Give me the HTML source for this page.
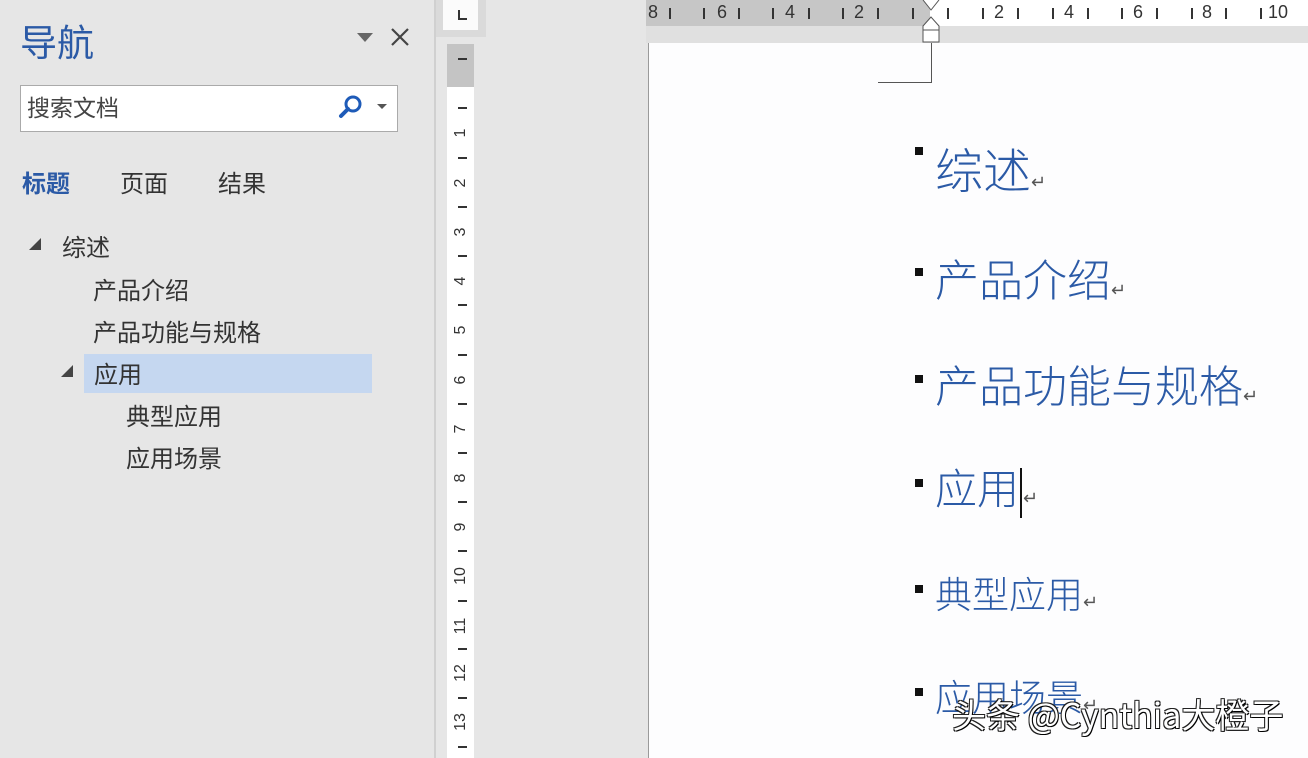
<!DOCTYPE html>
<html><head><meta charset="utf-8"><style>
*{margin:0;padding:0;box-sizing:border-box}
body{width:1308px;height:758px;overflow:hidden;background:#e6e6e6;position:relative;font-family:"Liberation Sans","Noto Sans CJK SC",sans-serif}
.a{position:absolute;white-space:nowrap}
.cj{font-family:"Noto Sans CJK SC","WenQuanYi Zen Hei",sans-serif}
.nav{font-size:24px;color:#333;line-height:1}
.doc{color:#2b5aa6;line-height:1;font-family:"Noto Sans CJK SC",sans-serif;font-weight:300}
.bul{position:absolute;width:8px;height:8px;background:#111}
.ret{font-size:18px;color:#555}
.vt{position:absolute;left:458px;width:9px;height:2px;background:#333}
.vn{position:absolute;left:450px;width:22px;text-align:center;font-size:16px;color:#333;transform:rotate(-90deg);line-height:16px}
.ht{position:absolute;top:8px;width:2px;height:11px;background:#333}
.hn{position:absolute;top:3px;font-size:18px;color:#333;line-height:18px}
</style></head><body>
<div class="a cj" style="left:20px;top:22px;font-size:37px;color:#2b5aa6;line-height:1">导航</div>
<div class="a" style="left:357px;top:33px;width:0;height:0;border-left:8px solid transparent;border-right:8px solid transparent;border-top:9px solid #666"></div>
<svg class="a" style="left:390px;top:27px" width="20" height="20"><path d="M2 2L18 18M18 2L2 18" stroke="#444" stroke-width="2.2"/></svg>
<div class="a" style="left:20px;top:85px;width:378px;height:47px;background:#fff;border:1px solid #aaa"></div>
<div class="a cj" style="left:27px;top:95px;font-size:23px;color:#444;line-height:1">搜索文档</div>
<svg class="a" style="left:335px;top:92px" width="32" height="30"><circle cx="18" cy="12" r="7" fill="none" stroke="#1e5bb8" stroke-width="3"/><path d="M13 17L6 24" stroke="#1e5bb8" stroke-width="4" stroke-linecap="round"/></svg>
<div class="a" style="left:377px;top:104px;width:0;height:0;border-left:5px solid transparent;border-right:5px solid transparent;border-top:5px solid #555"></div>
<div class="a cj" style="left:22px;top:170px;font-size:24px;color:#2b5aa6;font-weight:bold;line-height:1">标题</div>
<div class="a cj nav" style="left:120px;top:170px">页面</div>
<div class="a cj nav" style="left:218px;top:170px">结果</div>
<div class="a" style="left:29px;top:238px;width:0;height:0;border-left:12px solid transparent;border-bottom:12px solid #444"></div>
<div class="a cj nav" style="left:62px;top:234px">综述</div>
<div class="a cj nav" style="left:93px;top:277px">产品介绍</div>
<div class="a cj nav" style="left:93px;top:319px">产品功能与规格</div>
<div class="a" style="left:84px;top:354px;width:288px;height:39px;background:#c5d7f0"></div>
<div class="a" style="left:61px;top:365px;width:0;height:0;border-left:12px solid transparent;border-bottom:12px solid #444"></div>
<div class="a cj nav" style="left:94px;top:361px">应用</div>
<div class="a cj nav" style="left:126px;top:403px">典型应用</div>
<div class="a cj nav" style="left:126px;top:445px">应用场景</div>
<div class="a" style="left:434px;top:0;width:2px;height:758px;background:#d0d0d0"></div>
<div class="a" style="left:436px;top:0;width:50px;height:37px;background:#dadada"></div>
<div class="a" style="left:443px;top:0;width:35px;height:30px;background:#fbfbfb"></div>
<div class="a" style="left:458px;top:10px;width:2px;height:10px;background:#333"></div>
<div class="a" style="left:458px;top:18px;width:9px;height:2px;background:#333"></div>
<div class="a" style="left:447px;top:44px;width:27px;height:714px;background:#fff"></div>
<div class="a" style="left:447px;top:44px;width:27px;height:43px;background:#c4c4c4"></div>
<div class="vt" style="top:58px"></div>
<div class="vt" style="top:107px"></div>
<div class="vn" style="top:125px">1</div><div class="vt" style="top:157px"></div>
<div class="vn" style="top:175px">2</div><div class="vt" style="top:206px"></div>
<div class="vn" style="top:224px">3</div><div class="vt" style="top:255px"></div>
<div class="vn" style="top:273px">4</div><div class="vt" style="top:304px"></div>
<div class="vn" style="top:322px">5</div><div class="vt" style="top:354px"></div>
<div class="vn" style="top:372px">6</div><div class="vt" style="top:403px"></div>
<div class="vn" style="top:421px">7</div><div class="vt" style="top:452px"></div>
<div class="vn" style="top:470px">8</div><div class="vt" style="top:501px"></div>
<div class="vn" style="top:519px">9</div><div class="vt" style="top:550px"></div>
<div class="vn" style="top:568px">10</div><div class="vt" style="top:600px"></div>
<div class="vn" style="top:618px">11</div><div class="vt" style="top:648px"></div>
<div class="vn" style="top:665px">12</div><div class="vt" style="top:697px"></div>
<div class="vn" style="top:714px">13</div><div class="vt" style="top:746px"></div>
<div class="a" style="left:646px;top:0;width:662px;height:26px;background:#fff"></div>
<div class="a" style="left:646px;top:0;width:284px;height:26px;background:#c6c6c6"></div>
<div class="a" style="left:646px;top:26px;width:662px;height:17px;background:#e0e0e0"></div>
<div class="hn" style="left:648px">8</div><div class="ht" style="left:669px"></div><div class="ht" style="left:703px"></div>
<div class="hn" style="left:717px">6</div><div class="ht" style="left:738px"></div><div class="ht" style="left:772px"></div>
<div class="hn" style="left:785px">4</div><div class="ht" style="left:808px"></div><div class="ht" style="left:842px"></div>
<div class="hn" style="left:854px">2</div><div class="ht" style="left:877px"></div><div class="ht" style="left:912px"></div>
<div class="ht" style="left:947px"></div>
<div class="hn" style="left:994px">2</div><div class="ht" style="left:982px"></div><div class="ht" style="left:1017px"></div><div class="ht" style="left:1052px"></div>
<div class="hn" style="left:1064px">4</div><div class="ht" style="left:1087px"></div><div class="ht" style="left:1121px"></div>
<div class="hn" style="left:1133px">6</div><div class="ht" style="left:1156px"></div><div class="ht" style="left:1191px"></div>
<div class="hn" style="left:1202px">8</div><div class="ht" style="left:1225px"></div><div class="ht" style="left:1260px"></div>
<div class="hn" style="left:1268px">10</div>
<svg class="a" style="left:920px;top:0" width="22" height="45"><path d="M3 0L11 10L19 0" fill="#fff" stroke="#555"/><path d="M11 17L3 26V42H19V26Z" fill="#fff" stroke="#555"/><path d="M3 30H19" stroke="#555"/></svg>
<div class="a" style="left:648px;top:43px;width:660px;height:715px;background:#fdfdfe;border-left:1px solid #9a9a9a"></div>
<div class="a" style="left:931px;top:43px;width:1px;height:40px;background:#555"></div>
<div class="a" style="left:878px;top:82px;width:54px;height:1px;background:#555"></div>
<div class="bul" style="left:915px;top:147px"></div>
<div class="a doc" style="left:935px;top:143px;font-size:48px">综述<span class="ret">↵</span></div>
<div class="bul" style="left:915px;top:268px"></div>
<div class="a doc" style="left:935px;top:255px;font-size:44px">产品介绍<span class="ret">↵</span></div>
<div class="bul" style="left:915px;top:375px"></div>
<div class="a doc" style="left:935px;top:361px;font-size:44px">产品功能与规格<span class="ret">↵</span></div>
<div class="bul" style="left:915px;top:479px"></div>
<div class="a doc" style="left:935px;top:466px;font-size:42px">应用<span style="display:inline-block;width:2px;height:50px;background:#111;vertical-align:middle;margin:0 1px"></span><span class="ret">↵</span></div>
<div class="bul" style="left:915px;top:585px"></div>
<div class="a doc" style="left:935px;top:574px;font-size:37px">典型应用<span class="ret">↵</span></div>
<div class="bul" style="left:915px;top:688px"></div>
<div class="a doc" style="left:935px;top:677px;font-size:37px">应用场景<span class="ret">↵</span></div>
<div class="a cj" style="left:952px;top:697px;font-size:34px;color:#fff;line-height:1;text-shadow:1px 1px 0 #000,-1px -1px 0 #222,1px -1px 0 #222,-1px 1px 0 #222">头条 @Cynthia大橙子</div>
</body></html>
